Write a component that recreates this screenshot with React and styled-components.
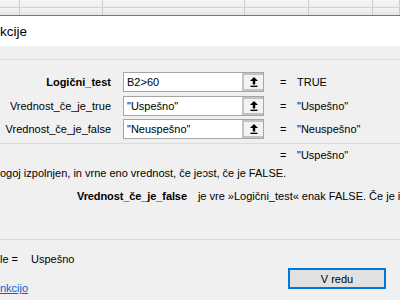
import React from "react";
import styled, { createGlobalStyle } from "styled-components";

const Global = createGlobalStyle`
  html, body { margin: 0; padding: 0; background: #f0f0f0; }
  body { font-family: "Liberation Sans", Arial, sans-serif; }
`;

const Frame = styled.div`
  width: 400px;
  height: 300px;
  overflow: hidden;
  display: flex;
  flex-direction: column;
  background: #f0f0f0;
  color: #000;
  font-size: 11px;
  font-family: "Liberation Sans", Arial, sans-serif;
`;

const SheetHeader = styled.div`
  height: 15px;
  border-bottom: 1px solid #4f7fb8;
  display: flex;
  flex-direction: column;
  flex: none;
`;

const HeaderRow = styled.div`
  display: flex;
  height: ${(p) => p.$h}px;
  background: ${(p) => p.$bg};
  border-bottom: ${(p) => (p.$line ? "1px solid #d2d2d2" : "none")};
`;

const HeaderCell = styled.div`
  width: ${(p) => p.$w}px;
  flex: none;
  border-right: 1px solid #cdcdcd;
  box-sizing: border-box;
`;

const TitleBar = styled.div`
  height: 30px;
  background: #fff;
  display: flex;
  align-items: center;
  font-size: 13.5px;
  flex: none;
  white-space: nowrap;
`;

const Band = styled.div`
  height: 13px;
  border-bottom: 1px solid #d9d9d9;
  flex: none;
`;

const Args = styled.div`
  padding-top: 12px;
  display: flex;
  flex-direction: column;
  gap: 3.5px;
`;

const ArgRow = styled.div`
  display: flex;
  align-items: center;
  height: 20px;
  white-space: nowrap;
`;

const ArgLabel = styled.div`
  width: 111px;
  flex: none;
  text-align: right;
  font-weight: ${(p) => (p.$bold ? 700 : 400)};
`;

const Spacer = styled.div`
  width: ${(p) => p.$w}px;
  flex: none;
`;

const InputBox = styled.div`
  margin-left: 12px;
  width: 141px;
  height: 20px;
  box-sizing: border-box;
  display: flex;
  border: 1px solid #a5a5a5;
  background: #fff;
  flex: none;
`;

const InputText = styled.div`
  flex: 1;
  padding-left: 3px;
  display: flex;
  align-items: center;
`;

const RefButton = styled.div`
  width: 21px;
  box-sizing: border-box;
  border: 2px solid #c3c3c3;
  border-right: none;
  background: #f2f2f2;
  display: flex;
  align-items: center;
  justify-content: center;
`;

const Eq = styled.div`
  margin-left: 16px;
  width: 17px;
  flex: none;
`;

const Value = styled.div``;

const Separator = styled.div`
  height: 1px;
  background: #dadada;
  margin-top: ${(p) => p.$mt}px;
  flex: none;
`;

const ResultRow = styled(ArgRow)`
  margin-top: 4px;
  height: 14px;
`;

const DescLine = styled.div`
  white-space: nowrap;
  line-height: 14px;
  margin-top: ${(p) => p.$mt}px;
  padding-left: ${(p) => p.$indent || 0}px;
  display: flex;
`;

const Bold = styled.span`
  font-weight: 700;
  letter-spacing: -0.1px;
  margin-right: 11px;
`;

const Footer = styled.div`
  display: flex;
  justify-content: space-between;
  padding-top: 12px;
`;

const FooterLeft = styled.div`
  display: flex;
  flex-direction: column;
  gap: 15px;
  line-height: 14px;
  white-space: nowrap;
`;

const FormulaResult = styled.div`
  display: flex;
  gap: 13px;
`;

const HelpLink = styled.a`
  color: #0066cc;
  text-decoration: underline;
`;

const OkButton = styled.div`
  width: 98px;
  height: 21px;
  box-sizing: border-box;
  margin-top: 16px;
  margin-right: 14px;
  border: 2px solid #0078d7;
  background: #e1e1e1;
  display: flex;
  align-items: center;
  justify-content: center;
`;

const RefIcon = () => (
  <svg width="8" height="10" viewBox="0 0 8 10">
    <polygon points="4,0 0,4 2.8,4 2.8,7.4 5.2,7.4 5.2,4 8,4" fill="#000" />
    <rect x="0.5" y="8.7" width="7" height="1.3" fill="#000" />
  </svg>
);

const headerCols = [20, 83, 142, 64, 64, 27];

const args = [
  { label: "Logični_test", bold: true, input: "B2>60", value: "TRUE" },
  { label: "Vrednost_če_je_true", input: '"Uspešno"', value: '"Uspešno"' },
  { label: "Vrednost_če_je_false", input: '"Neuspešno"', value: '"Neuspešno"' },
];

export default function App() {
  return (
    <Frame>
      <Global />
      <SheetHeader>
        <HeaderRow $h={7} $line $bg="linear-gradient(#f7f7f7, #eeeeee)">
          {headerCols.map((w, i) => (
            <HeaderCell key={i} $w={w} />
          ))}
        </HeaderRow>
        <HeaderRow $h={7} $bg="linear-gradient(#f6f6f6, #e4e4e4)">
          {headerCols.map((w, i) => (
            <HeaderCell key={i} $w={w} />
          ))}
        </HeaderRow>
      </SheetHeader>
      <TitleBar>kcije</TitleBar>
      <Band />
      <Args>
        {args.map((a) => (
          <ArgRow key={a.label}>
            <ArgLabel $bold={a.bold}>{a.label}</ArgLabel>
            <InputBox>
              <InputText>{a.input}</InputText>
              <RefButton>
                <RefIcon />
              </RefButton>
            </InputBox>
            <Eq>=</Eq>
            <Value>{a.value}</Value>
          </ArgRow>
        ))}
      </Args>
      <Separator $mt={4} />
      <ResultRow>
        <Spacer $w={264} />
        <Eq>=</Eq>
        <Value>"Uspešno"</Value>
      </ResultRow>
      <DescLine $mt={4}>ogoj izpolnjen, in vrne eno vrednost, če jeɔst, če je FALSE.</DescLine>
      <DescLine $mt={9} $indent={77}>
        <Bold>Vrednost_če_je_false</Bold>
        je vre »Logični_test« enak FALSE. Če je iz
      </DescLine>
      <Separator $mt={36} />
      <Footer>
        <FooterLeft>
          <FormulaResult>
            <span>le =</span>
            <span>Uspešno</span>
          </FormulaResult>
          <HelpLink>nkcijo</HelpLink>
        </FooterLeft>
        <OkButton>V redu</OkButton>
      </Footer>
    </Frame>
  );
}
